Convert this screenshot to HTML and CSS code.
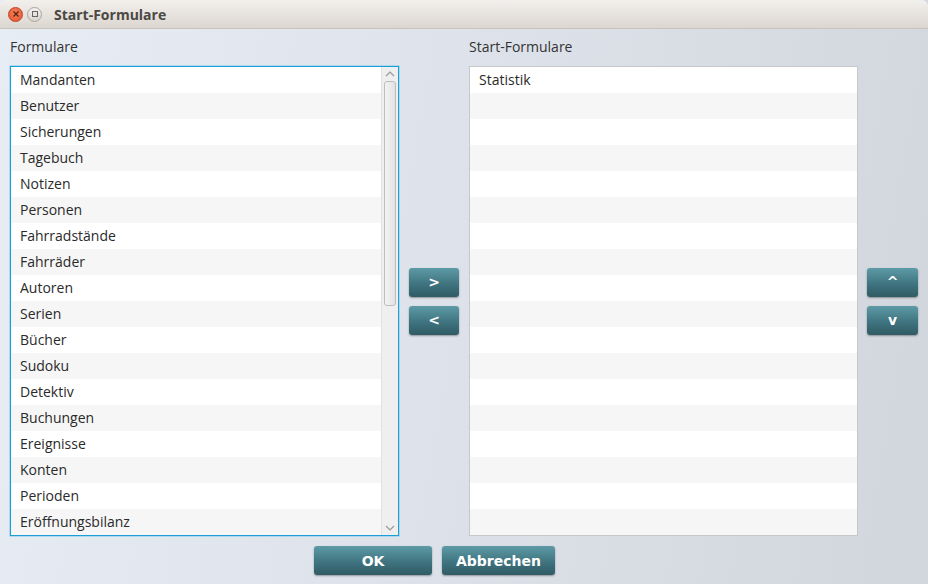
FILE: index.html
```html
<!DOCTYPE html>
<html>
<head>
<meta charset="utf-8">
<link rel="stylesheet" href="styles.css">
</head>
<body>
<div class="window">
  <div class="titlebar">
    <span class="wbtn close"><svg width="8" height="8" viewBox="0 0 8 8"><path d="M1.5 1.5L6.5 6.5M6.5 1.5L1.5 6.5" stroke="#5a2010" stroke-width="1.3"/></svg></span>
    <span class="wbtn max"><svg width="8" height="8" viewBox="0 0 8 8"><rect x="1.5" y="1.5" width="5" height="5" fill="none" stroke="#666" stroke-width="1"/></svg></span>
    <span class="title">Start-Formulare</span>
  </div>
  <div class="content">
    <div class="main">
      <div class="col left">
        <div class="label">Formulare</div>
        <div class="list focused">
          <div class="rows">
            <div class="row">Mandanten</div>
            <div class="row">Benutzer</div>
            <div class="row">Sicherungen</div>
            <div class="row">Tagebuch</div>
            <div class="row">Notizen</div>
            <div class="row">Personen</div>
            <div class="row">Fahrradstände</div>
            <div class="row">Fahrräder</div>
            <div class="row">Autoren</div>
            <div class="row">Serien</div>
            <div class="row">Bücher</div>
            <div class="row">Sudoku</div>
            <div class="row">Detektiv</div>
            <div class="row">Buchungen</div>
            <div class="row">Ereignisse</div>
            <div class="row">Konten</div>
            <div class="row">Perioden</div>
            <div class="row">Eröffnungsbilanz</div>
          </div>
          <div class="scrollbar">
            <svg class="arrow" width="12" height="8" viewBox="0 0 12 8"><path d="M2 6L6 2L10 6" fill="none" stroke="#999" stroke-width="1.2"/></svg>
            <div class="track"><div class="thumb"></div></div>
            <svg class="arrow" width="12" height="8" viewBox="0 0 12 8"><path d="M2 2L6 6L10 2" fill="none" stroke="#999" stroke-width="1.2"/></svg>
          </div>
        </div>
      </div>
      <div class="mid">
        <button class="btn small">&gt;</button>
        <button class="btn small">&lt;</button>
      </div>
      <div class="col right">
        <div class="label">Start-Formulare</div>
        <div class="list">
          <div class="rows">
            <div class="row">Statistik</div>
            <div class="row"></div>
            <div class="row"></div>
            <div class="row"></div>
            <div class="row"></div>
            <div class="row"></div>
            <div class="row"></div>
            <div class="row"></div>
            <div class="row"></div>
            <div class="row"></div>
            <div class="row"></div>
            <div class="row"></div>
            <div class="row"></div>
            <div class="row"></div>
            <div class="row"></div>
            <div class="row"></div>
            <div class="row"></div>
            <div class="row"></div>
          </div>
        </div>
      </div>
      <div class="side">
        <button class="btn small wide">^</button>
        <button class="btn small wide">v</button>
      </div>
    </div>
    <div class="footer">
      <button class="btn big ok">OK</button>
      <button class="btn big cancel">Abbrechen</button>
    </div>
  </div>
</div>
</body>
</html>
```

FILE: styles.css
```css
* { box-sizing: border-box; }
html, body { margin: 0; padding: 0; }
body {
  width: 928px;
  height: 584px;
  overflow: hidden;
  font-family: "Open Sans", "DejaVu Sans", sans-serif;
}
.window {
  width: 928px;
  height: 584px;
  display: flex;
  flex-direction: column;
  background: linear-gradient(100deg, #e7edf5 0%, #dde2ea 50%, #d1d6dd 100%);
}
.titlebar {
  height: 29px;
  flex: none;
  display: flex;
  align-items: center;
  padding-left: 8px;
  background: linear-gradient(#f2f0ed, #dcd6d0);
  border-radius: 6px 6px 0 0;
  border-bottom: 1px solid #c9c3bd;
}
.wbtn {
  width: 15px;
  height: 15px;
  border-radius: 50%;
  display: flex;
  align-items: center;
  justify-content: center;
  margin-right: 4px;
}
.wbtn.close {
  background: radial-gradient(circle at 50% 40%, #f7825d, #e3532b);
  border: 1px solid #b9442a;
}
.wbtn.max {
  background: linear-gradient(#f4f2f0, #d8d4cf);
  border: 1px solid #aaa49e;
}
.title {
  margin-left: 8px;
  font-family: "Open Sans", sans-serif;
  font-weight: bold;
  font-size: 14px;
  color: #4b4844;
}
.content {
  flex: 1;
  display: flex;
  flex-direction: column;
  padding: 0 10px;
}
.main {
  display: flex;
  padding-top: 8px;
}
.col { display: flex; flex-direction: column; }
.col.left { width: 389px; }
.col.right { width: 389px; }
.label {
  height: 20px;
  font-size: 14px;
  color: #333;
  line-height: 20px;
  margin-bottom: 9px;
}
.list {
  height: 470px;
  background: #fff;
  border: 1px solid #c8c8c8;
  display: flex;
  overflow: hidden;
}
.list.focused {
  border: 1px solid #1aa0d8;
  box-shadow: 0 0 0 0.5px #7fc8ea;
}
.rows { flex: 1; }
.row {
  height: 26px;
  line-height: 26px;
  padding-left: 9px;
  font-size: 14px;
  color: #2a2a2a;
  white-space: nowrap;
}
.row:nth-child(even) { background: #f6f6f6; }
.scrollbar {
  width: 17px;
  background: #efefef;
  border-left: 1px solid #e2e2e2;
  display: flex;
  flex-direction: column;
  align-items: center;
}
.arrow { flex: none; margin: 3px 0 3px; }
.track { flex: 1; width: 100%; padding: 0 2px; }
.thumb {
  height: 225px;
  border: 1px solid #bdbdbd;
  border-radius: 3px;
  background: linear-gradient(90deg, #f3f3f3, #e2e2e2);
}
.mid, .side {
  display: flex;
  flex-direction: column;
  gap: 9px;
  padding-top: 29px;
  justify-content: center;
}
.mid {
  width: 70px;
  align-items: center;
}
.side {
  flex: 1;
  align-items: flex-end;
}
.btn {
  border: none;
  border-radius: 3px;
  background: linear-gradient(#5d9ba6, #3f7480 55%, #2f5b64);
  color: #fff;
  font-family: "DejaVu Sans", sans-serif;
  font-weight: bold;
  box-shadow: 0 1px 2px rgba(0,0,0,0.35);
  padding: 0;
}
.btn.small {
  width: 50px;
  height: 29px;
  font-size: 14px;
}
.btn.small.wide { width: 51px; }
.footer {
  display: flex;
  gap: 10px;
  padding-top: 10px;
  padding-left: 304px;
}
.btn.big {
  height: 29px;
  font-size: 14px;
}
.btn.ok { width: 118px; }
.btn.cancel { width: 113px; }
```
